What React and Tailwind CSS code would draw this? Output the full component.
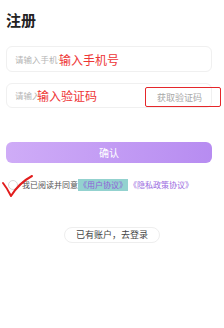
import React from 'react'

const font = { fontFamily: '"Noto Sans CJK SC", "Noto Sans", sans-serif' }

export default function App() {
  return (
    <div className="w-[224px] h-[328px] bg-white relative overflow-hidden px-[6px]" style={font}>
      {/* Title */}
      <h1 className="mt-[11px] text-[15px] leading-[17px] font-bold text-[#222]">注册</h1>

      {/* Phone input */}
      <div className="mt-[18px] h-[26px] w-[206px] rounded-[6px] border border-[#f0f0f0] flex items-center pl-[8px]">
        <span className="w-[44px] overflow-hidden whitespace-nowrap text-[8.5px] text-[#b5b5b5]">请输入手机号</span>
        <span className="text-[12px] leading-[15px] text-[#ee3535]">输入手机号</span>
      </div>

      {/* Code input */}
      <div className="relative mt-[11px] h-[25px] w-[206px] rounded-[6px] border border-[#f0f0f0] flex items-center pl-[8px] pr-[8px]">
        <span className="w-[22px] overflow-hidden whitespace-nowrap text-[8.5px] text-[#b5b5b5]">请输入验证码</span>
        <span className="text-[12px] leading-[15px] text-[#ee3535]">输入验证码</span>
        <span className="ml-auto text-[9px] text-[#a8a8a8] mr-[1px] mt-[5px]">获取验证码</span>
        <div className="absolute left-[138px] top-[3px] w-[76px] h-[20px] rounded-[2px] border-[1.5px] border-[#e5262a]" />
      </div>

      {/* Confirm */}
      <button className="mt-[34px] h-[21px] w-[206px] rounded-[6px] bg-gradient-to-r from-[#cfacf7] to-[#b78cf1] text-white text-[10px] flex items-center justify-center">
        确认
      </button>

      {/* Agreement */}
      <div className="relative mt-[16px] flex items-center h-[12px] text-[8px] leading-[12px]">
        <span className="w-[10px] h-[10px] rounded-full border border-[#d8d8d8] ml-[2px] mr-[4px] shrink-0" />
        <span className="text-[#555]">我已阅读并同意</span>
        <span className="bg-[#93d2cf] text-[#8f5fd8] px-[1px]">《用户协议》</span>
        <span className="text-[#9a6be0] ml-[1px]">《隐私政策协议》</span>
        <svg className="absolute left-[-5px] top-[-9px]" width="34" height="30" viewBox="0 0 34 30" fill="none">
          <path d="M2 13 Q6 18 10 26 Q18 13 31 6" stroke="#e21d1d" strokeWidth="2" strokeLinecap="round" strokeLinejoin="round" />
        </svg>
      </div>

      {/* Login link */}
      <div className="mt-[36px] flex justify-center">
        <div className="h-[16px] px-[11px] rounded-full border border-[#eeeeee] flex items-center text-[9px] text-[#444]">
          已有账户，去登录
        </div>
      </div>
    </div>
  )
}
